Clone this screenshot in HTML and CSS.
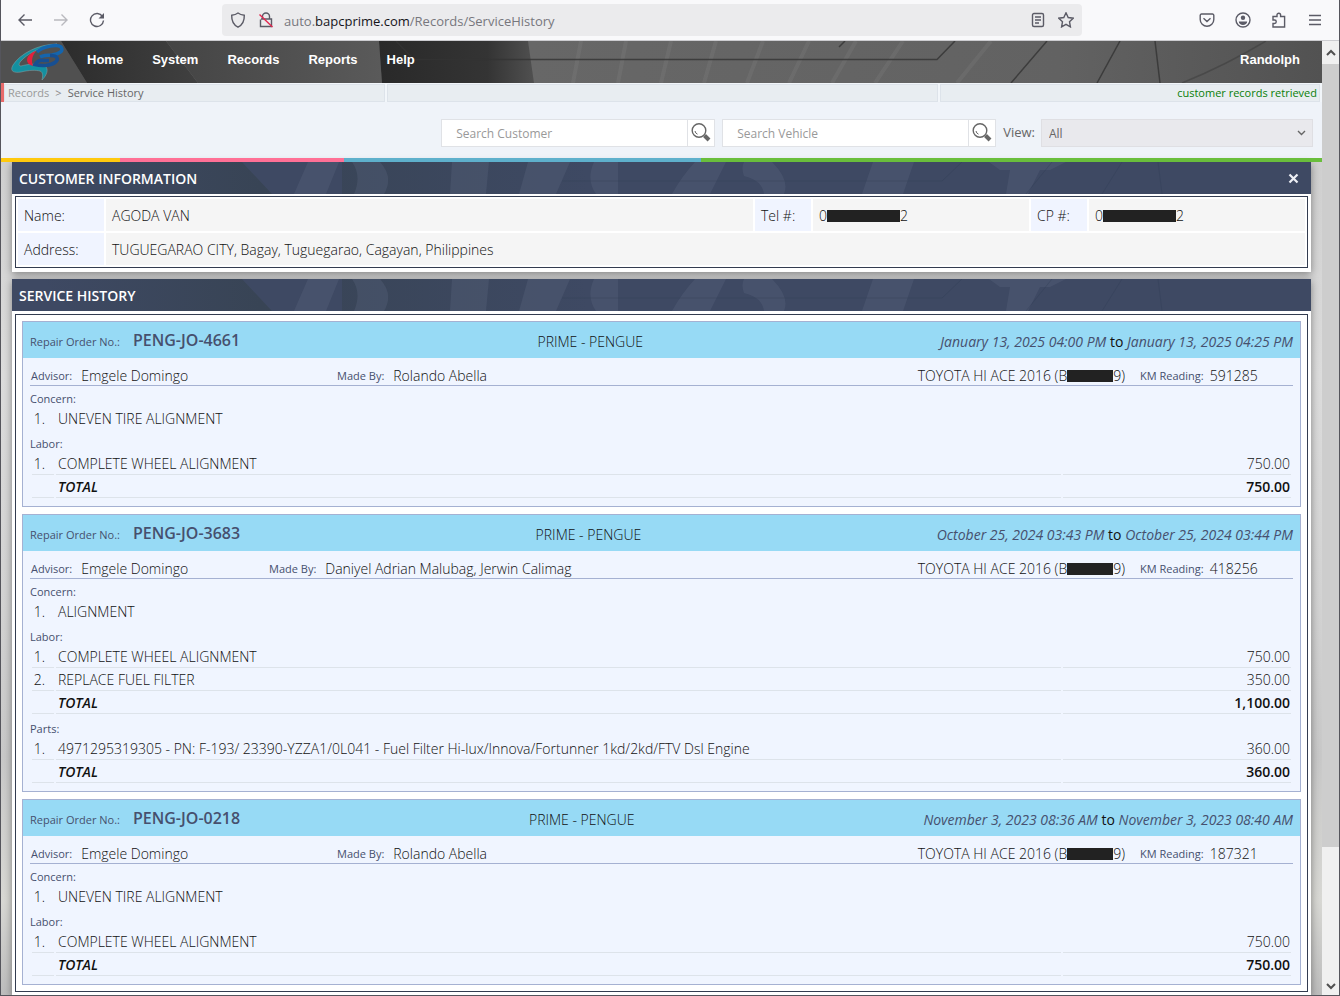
FILE: index.html
```html
<!DOCTYPE html>
<html lang="en">
<head>
    <meta charset="UTF-8">
    <meta name="viewport" content="width=device-width, initial-scale=1.0">
    <title>Service History</title>
    <link rel="stylesheet" href="styles.css">
</head>
<body>
    <!-- Browser toolbar -->
    <div class="toolbar">
        <div class="nav-buttons">
            <button type="button" aria-label="Back"><svg width="16" height="16" viewBox="0 0 16 16"><path d="M15 8H2M7.500 2.500L2 8l5.500 5.500"/></svg></button>
            <button type="button" aria-label="Forward" class="faded"><svg width="16" height="16" viewBox="0 0 16 16"><path d="M1 8h13M8.500 2.500L14 8l-5.500 5.500"/></svg></button>
            <button type="button" aria-label="Reload"><svg width="16" height="16" viewBox="0 0 16 16"><path d="M13.500 4.500A6.500 6.500 0 1 0 14.500 8.500"/><path class="solid" d="M15 1v5.500H9.500z"/></svg></button>
        </div>
        <div class="url-bar">
            <svg width="16" height="16" viewBox="0 0 16 16"><path d="M8 1c2 1.500 4 2 6.300 2.300C14.500 9 12.500 13 8 15.200 3.500 13 1.500 9 1.700 3.300 4 3 6 2.500 8 1z"/></svg>
            <svg class="lock" width="16" height="16" viewBox="0 0 16 16"><path d="M4.500 7V4.500a3.500 3.500 0 0 1 7 0V7M3 7h10.500v7.500H2.500V7.500"/><path class="slash" d="M1.500 2.500l13 12.500"/></svg>
            <span class="url">auto.<b>bapcprime.com</b>/Records/ServiceHistory</span>
            <svg width="16" height="16" viewBox="0 0 16 16"><rect x="2.500" y="1.500" width="11" height="13" rx="1.500"/><path d="M5 5h6M5 8h6M5 11h4"/></svg>
            <svg class="star" width="16" height="16" viewBox="0 0 16 16"><path d="M8 .8l2.200 4.700 5 .7-3.700 3.500.9 5.200L8 12.400l-4.400 2.500.9-5.200L.8 6.200l5-.7z"/></svg>
        </div>
        <div class="tool-buttons">
            <button type="button" aria-label="Pocket"><svg width="16" height="16" viewBox="0 0 16 16"><path d="M2.500 2h11a1.300 1.300 0 0 1 1.300 1.300V7.500a6.800 6.800 0 0 1-13.600 0V3.300A1.300 1.300 0 0 1 2.500 2zM4.500 6.300L8 9.600l3.500-3.300"/></svg></button>
            <button type="button" aria-label="Account"><svg width="16" height="16" viewBox="0 0 16 16"><circle cx="8" cy="8" r="7"/><circle class="solid" cx="8" cy="5.800" r="2.200"/><path class="solid" d="M3.800 9.500h8.400c0 2-2 3.500-4.200 3.500s-4.200-1.500-4.200-3.500z"/></svg></button>
            <button type="button" aria-label="Extensions"><svg width="16" height="16" viewBox="0 0 16 16"><path d="M2 15V11.500h1.500a1.700 1.700 0 0 0 0-3.500H2V4.500h4V3a1.800 1.800 0 0 1 3.600 0v1.500h4V15z"/></svg></button>
            <button type="button" aria-label="Menu"><svg width="16" height="16" viewBox="0 0 16 16"><path d="M2 3.500h12M2 8h12M2 12.500h12"/></svg></button>
        </div>
    </div>

    <div class="window">
        <div class="page">
            <header>
                <a href="#" class="logo" aria-label="BAPC Prime">
                    <svg width="54" height="38" viewBox="0 0 54 38">
                        <path fill="#1490a0" stroke="#86a4aa" stroke-width=".5" d="M46 1C27 1 9 11 2 22c-4 7 2 8 8 7 8-2 15-2 19-1 3 1 3 5 2 9 5-5 7-11 3-14-6-3-17-2-24 0-3 0-2-3 0-5C15 12 28 4 46 1z"/>
                        <path fill="none" stroke="#1465ae" stroke-width="3.500" d="M26 9C33 3 46 1 50 4c3 4-2 7-9 8-5 0-8 0-12 2"/>
                        <path fill="none" stroke="#174f92" stroke-width="3.500" d="M39 12.500c8 0 9 4 5 7-4 3-13 4-20 2 2-3 5-5 9-4h5"/>
                        <path fill="#e5203c" d="M25 8c-6 2-9 6-9 9 0 3 2 5 6 6-2-5-1-10 3-15z"/>
                    </svg>
                </a>
                <nav>
                    <a href="#">Home</a>
                    <a href="#">System</a>
                    <a href="#">Records</a>
                    <a href="#">Reports</a>
                    <a href="#">Help</a>
                </nav>
                <a href="#" class="user">Randolph</a>
            </header>

            <div class="breadcrumb">
                <div class="crumbs"><a href="#">Records</a><i>&gt;</i><span>Service History</span></div>
                <div class="crumb-mid"></div>
                <div class="status">customer records retrieved</div>
            </div>

            <form class="filters">
                <div class="search">
                    <input type="text" placeholder="Search Customer" aria-label="Search Customer">
                    <button type="button" aria-label="Find customer"><svg width="22" height="22" viewBox="0 0 22 22"><circle cx="9" cy="8.500" r="6.800"/><path class="glint" d="M5 9a4 4 0 0 0 2.500 3.200"/><path class="handle" d="M14.500 13.500l4.500 4.500"/></svg></button>
                </div>
                <div class="search">
                    <input type="text" placeholder="Search Vehicle" aria-label="Search Vehicle">
                    <button type="button" aria-label="Find vehicle"><svg width="22" height="22" viewBox="0 0 22 22"><circle cx="9" cy="8.500" r="6.800"/><path class="glint" d="M5 9a4 4 0 0 0 2.500 3.200"/><path class="handle" d="M14.500 13.500l4.500 4.500"/></svg></button>
                </div>
                <label for="view">View:</label>
                <select id="view">
                    <option>All</option>
                </select>
            </form>
            <div class="strip"></div>

            <main>
                <section class="panel">
                    <div class="panel-title">
                        <h2>CUSTOMER INFORMATION</h2>
                        <button type="button" aria-label="Close"><svg width="11" height="11" viewBox="0 0 11 11"><path d="M1.500 1.500l8 8M9.500 1.500l-8 8"/></svg></button>
                    </div>
                    <div class="panel-body">
                        <table class="customer">
                            <tr>
                                <th>Name:</th>
                                <td>AGODA VAN</td>
                                <th class="short">Tel #:</th>
                                <td class="phone">0<span class="mask"></span>2</td>
                                <th class="short">CP #:</th>
                                <td class="phone">0<span class="mask"></span>2</td>
                            </tr>
                            <tr>
                                <th>Address:</th>
                                <td colspan="5">TUGUEGARAO CITY, Bagay, Tuguegarao, Cagayan, Philippines</td>
                            </tr>
                        </table>
                    </div>
                </section>

                <section class="panel">
                    <div class="panel-title">
                        <h2>SERVICE HISTORY</h2>
                    </div>
                    <div class="panel-body orders">
                        <article class="order">
                            <div class="order-head">
                                <div><small>Repair Order No.:</small><strong>PENG-JO-4661</strong></div>
                                <div>PRIME - PENGUE</div>
                                <div class="dates"><em>January 13, 2025 04:00 PM</em> to <em>January 13, 2025 04:25 PM</em></div>
                            </div>
                            <div class="order-meta">
                                <div class="advisor"><small>Advisor:</small>Emgele Domingo</div>
                                <div class="made-by"><small>Made By:</small>Rolando Abella</div>
                                <div class="vehicle">TOYOTA HI ACE 2016 (B<span class="mask plate"></span>9)</div>
                                <div class="km"><small>KM Reading:</small>591285</div>
                            </div>
                            <h3>Concern:</h3>
                            <table class="items concern">
                                <tr><td class="no">1.</td><td>UNEVEN TIRE ALIGNMENT</td></tr>
                            </table>
                            <h3>Labor:</h3>
                            <table class="items">
                                <tr><td class="no">1.</td><td>COMPLETE WHEEL ALIGNMENT</td><td class="amount">750.00</td></tr>
                                <tr class="total"><td class="no"></td><td>TOTAL</td><td class="amount">750.00</td></tr>
                            </table>
                        </article>

                        <article class="order">
                            <div class="order-head">
                                <div><small>Repair Order No.:</small><strong>PENG-JO-3683</strong></div>
                                <div>PRIME - PENGUE</div>
                                <div class="dates"><em>October 25, 2024 03:43 PM</em> to <em>October 25, 2024 03:44 PM</em></div>
                            </div>
                            <div class="order-meta">
                                <div class="advisor narrow"><small>Advisor:</small>Emgele Domingo</div>
                                <div class="made-by"><small>Made By:</small>Daniyel Adrian Malubag, Jerwin Calimag</div>
                                <div class="vehicle">TOYOTA HI ACE 2016 (B<span class="mask plate"></span>9)</div>
                                <div class="km"><small>KM Reading:</small>418256</div>
                            </div>
                            <h3>Concern:</h3>
                            <table class="items concern">
                                <tr><td class="no">1.</td><td>ALIGNMENT</td></tr>
                            </table>
                            <h3>Labor:</h3>
                            <table class="items">
                                <tr><td class="no">1.</td><td>COMPLETE WHEEL ALIGNMENT</td><td class="amount">750.00</td></tr>
                                <tr><td class="no">2.</td><td>REPLACE FUEL FILTER</td><td class="amount">350.00</td></tr>
                                <tr class="total"><td class="no"></td><td>TOTAL</td><td class="amount">1,100.00</td></tr>
                            </table>
                            <h3>Parts:</h3>
                            <table class="items">
                                <tr><td class="no">1.</td><td>4971295319305 - PN: F-193/ 23390-YZZA1/0L041 - Fuel Filter Hi-lux/Innova/Fortunner 1kd/2kd/FTV Dsl Engine</td><td class="amount">360.00</td></tr>
                                <tr class="total"><td class="no"></td><td>TOTAL</td><td class="amount">360.00</td></tr>
                            </table>
                        </article>

                        <article class="order">
                            <div class="order-head">
                                <div><small>Repair Order No.:</small><strong>PENG-JO-0218</strong></div>
                                <div>PRIME - PENGUE</div>
                                <div class="dates"><em>November 3, 2023 08:36 AM</em> to <em>November 3, 2023 08:40 AM</em></div>
                            </div>
                            <div class="order-meta">
                                <div class="advisor"><small>Advisor:</small>Emgele Domingo</div>
                                <div class="made-by"><small>Made By:</small>Rolando Abella</div>
                                <div class="vehicle">TOYOTA HI ACE 2016 (B<span class="mask plate"></span>9)</div>
                                <div class="km"><small>KM Reading:</small>187321</div>
                            </div>
                            <h3>Concern:</h3>
                            <table class="items concern">
                                <tr><td class="no">1.</td><td>UNEVEN TIRE ALIGNMENT</td></tr>
                            </table>
                            <h3>Labor:</h3>
                            <table class="items">
                                <tr><td class="no">1.</td><td>COMPLETE WHEEL ALIGNMENT</td><td class="amount">750.00</td></tr>
                                <tr class="total"><td class="no"></td><td>TOTAL</td><td class="amount">750.00</td></tr>
                            </table>
                        </article>
                    </div>
                </section>
            </main>
        </div>

        <div class="scrollbar">
            <button type="button" aria-label="Scroll up"><svg width="10" height="8" viewBox="0 0 10 8"><path d="M1 6l4-4 4 4"/></svg></button>
            <div class="thumb"></div>
            <div class="track"></div>
            <button type="button" aria-label="Scroll down"><svg width="10" height="8" viewBox="0 0 10 8"><path d="M1 2l4 4 4-4"/></svg></button>
        </div>
    </div>
</body>
</html>
```
FILE: styles.css
```css
* {
    box-sizing: border-box;
}
body {
    margin: 0;
    height: 100vh;
    display: flex;
    flex-direction: column;
    overflow: hidden;
    border: 1px solid #55555c;
    border-top: 0;
    font-family: "Open Sans", "Noto Sans", sans-serif;
    font-size: 13px;
    line-height: 19px;
    color: #111;
}
button {
    padding: 0;
    border: 0;
    background: none;
    display: flex;
    align-items: center;
    justify-content: center;
}
a {
    text-decoration: none;
}
svg {
    fill: none;
    stroke: #5b5b66;
    stroke-width: 1.400;
    display: block;
    flex: none;
}

/* Browser toolbar */
.toolbar {
    flex: none;
    height: 41px;
    display: flex;
    align-items: center;
    background-color: #f9f9fb;
    border-bottom: 1px solid #ccccd0;
}
.toolbar .solid {
    fill: #5b5b66;
    stroke: none;
}
.nav-buttons {
    display: flex;
    gap: 20px;
    padding-left: 16px;
    width: 221px;
}
.faded {
    opacity: 0.4;
}
.url-bar {
    flex: 1;
    height: 32px;
    display: flex;
    align-items: center;
    padding: 0 8px;
    background-color: #ebebed;
    border-radius: 4px;
}
.url-bar .lock {
    margin: 0 10px 0 12px;
}
.url-bar .slash {
    stroke: #e22850;
}
.url-bar .star {
    margin-left: 12px;
}
.url {
    flex: 1;
    padding-top: 2px;
    color: #77777d;
}
.url b {
    font-weight: 400;
    color: #15141a;
}
.tool-buttons {
    display: flex;
    gap: 20px;
    padding-right: 16px;
    width: 257px;
    justify-content: flex-end;
}

.window {
    flex: 1;
    min-height: 0;
    display: flex;
}
.page {
    flex: 1;
    min-width: 0;
    overflow: hidden;
    background: linear-gradient(#e2e2e2, #cfcfcf 12%, #dcdcdc 35%, #d2d2d2 60%, #c8c8c8 75%, #d8d8d4 90%, #bdbdbd);
}

/* App header */
header {
    height: 42px;
    display: flex;
    align-items: center;
    padding: 0 22px 0 10px;
    background-color: #666;
    background-image: url("data:image/svg+xml,%3Csvg xmlns='http://www.w3.org/2000/svg' width='1321' height='42'%3E%3Cdefs%3E%3ClinearGradient id='a'%3E%3Cstop stop-color='%232c2c2c'/%3E%3Cstop offset='1' stop-color='%23404040'/%3E%3C/linearGradient%3E%3ClinearGradient id='b'%3E%3Cstop stop-color='%23444'/%3E%3Cstop offset='1' stop-color='%235a5a5a'/%3E%3C/linearGradient%3E%3ClinearGradient id='c'%3E%3Cstop stop-color='%23292929'/%3E%3Cstop offset='.7' stop-color='%23343434'/%3E%3Cstop offset='1' stop-color='%23505050'/%3E%3C/linearGradient%3E%3ClinearGradient id='d'%3E%3Cstop stop-color='%236c6c6c'/%3E%3Cstop offset='.8' stop-color='%23626262'/%3E%3Cstop offset='1' stop-color='%23525252'/%3E%3C/linearGradient%3E%3C/defs%3E%3Cpath fill='url(%23d)' d='M0 0h1321v42H0z'/%3E%3Cpath fill='%23505050' d='M0 0h60l26 42H0z'/%3E%3Cpath fill='url(%23a)' d='M60 0h105l32 42H86z'/%3E%3Cpath fill='url(%23b)' d='M165 0h213l3 42H197z'/%3E%3Cpath fill='url(%23c)' d='M378 0h149l6 42H381z'/%3E%3Cg fill='none' stroke='%23fff' stroke-opacity='.05' stroke-width='4'%3E%3Cpath d='M580 0l-8 42M625 0l-8 42M670 0l-10 42M715 0l-12 42M762 0l-16 42M808 0l-20 42M855 0l-24 42M902 0l-28 42M990 0l-34 42'/%3E%3C/g%3E%3Cg fill='none' stroke='%23333' stroke-opacity='.8' stroke-width='1.5'%3E%3Cpath d='M395 0l18 18.500h523l18-18.500M838 6l6-6M1046 0l-36 42M1119 0l-23 42M1154 0l5 42'/%3E%3Cpath stroke-opacity='.4' d='M1265 0q-40 24-84 42'/%3E%3C/g%3E%3C/svg%3E");
    background-size: 100% 100%;
    font-family: "Liberation Sans", Arial, sans-serif;
    font-weight: bold;
}
header .logo svg {
    stroke: none;
}
header nav {
    flex: 1;
    display: flex;
    gap: 29px;
    padding: 0 0 6px 22px;
}
header nav a, header .user {
    color: #fff;
}
header .user {
    padding-bottom: 6px;
}

.breadcrumb {
    display: flex;
    gap: 2px;
    height: 19px;
    padding: 1px 2px 0 0;
    background-color: #f2f6fa;
    border-left: 3px solid #e86a6a;
    font-size: 11px;
    line-height: 15px;
}
.breadcrumb > div {
    background-color: #e8edf1;
    border: 1px solid #dde3ea;
}
.crumbs {
    flex: 379;
    padding-left: 3px;
    color: #666;
}
.crumbs a {
    color: #999;
}
.crumbs i {
    font-style: normal;
    color: #888;
    margin: 0 6px;
}
.crumb-mid {
    flex: 554;
}
.status {
    flex: 379;
    text-align: right;
    padding-right: 2px;
    color: #087f08;
}

.filters {
    display: flex;
    justify-content: flex-end;
    align-items: center;
    height: 56px;
    padding: 5px 9px 0 0;
    background-color: #eff3f9;
    color: #666;
}
.search {
    display: flex;
    height: 28px;
    margin-right: 7px;
    background-color: #fff;
    border: 1px solid #e0e2e6;
}
.search input {
    width: 245px;
    border: 0;
    padding: 2px 14px 0;
    background: none;
    font: inherit;
    font-size: 12px;
}
.search input::placeholder {
    color: #999;
}
.search button {
    width: 27px;
    border-left: 1px solid #e0e2e6;
}
.search svg {
    stroke: #666;
}
.search .glint {
    stroke-width: 1;
}
.search .handle {
    stroke-width: 4;
}
.filters select {
    width: 272px;
    height: 28px;
    margin-left: 6px;
    padding: 2px 7px 0;
    border: 1px solid #dfdfe3;
    border-radius: 0;
    appearance: none;
    background: #e9e9ed url("data:image/svg+xml,%3Csvg xmlns='http://www.w3.org/2000/svg' width='9' height='6'%3E%3Cpath fill='none' stroke='%23666' stroke-width='1.400' d='M1 1l3.500 3.500L8 1'/%3E%3C/svg%3E") no-repeat right 6px center;
    font: inherit;
    font-size: 12px;
    color: #666;
}
.strip {
    height: 4px;
    background: linear-gradient(90deg, #ffc90e 9%, #ff7096 9% 26%, #5eb0cc 26% 53%, #69be3c 53%);
    /* keeps the panel shadow off the strip */
    position: relative;
    z-index: 1;
}

/* Panels */
main {
    padding: 0 11px;
    font-size: 14px;
    font-weight: 300;
}
.panel {
    margin-bottom: 7px;
    background-color: #fff;
    box-shadow: 0 2px 8px rgba(0, 0, 0, 0.4);
}
.panel-title {
    height: 32px;
    display: flex;
    align-items: center;
    justify-content: space-between;
    padding: 0 12px 0 7px;
    background-color: #3e4963;
    background-image: url("data:image/svg+xml,%3Csvg xmlns='http://www.w3.org/2000/svg' width='1299' height='32'%3E%3Cdefs%3E%3ClinearGradient id='a'%3E%3Cstop stop-color='%23384455' stop-opacity='0'/%3E%3Cstop offset='.4' stop-color='%23384455'/%3E%3Cstop offset='1' stop-color='%23384455' stop-opacity='0'/%3E%3C/linearGradient%3E%3C/defs%3E%3Cpath fill='url(%23a)' d='M30 0h200l30 32H60zM330 0h240l8 32H330z'/%3E%3Cg fill='%23606b85' fill-opacity='.28'%3E%3Cpath d='M296 0h31l-13 32h-32zM340 0h28q14 15 4 32h-30q8-18-2-32zM440 0h37l-3 32h-36zM516 0h42l-14 32h-37zM582 0h24v32h-22q-10-14-2-32zM683 0h31l-16 32h-38q10-18 23-32zM732 0h28q18 18 12 32h-20q-2-14-20-18 -3-8 0-14zM861 0h41l-11 32h-41zM977 0h77l-16 8h-10l-12 24h-22l4-24h-10z'/%3E%3C/g%3E%3Cpath fill='none' stroke='%23303a52' stroke-opacity='.3' d='M550 19h380l20-19M1040 0l-26 32M1110 0l-20 32M1146 0l4 32'/%3E%3C/svg%3E");
    background-size: 100% 100%;
}
.panel-title h2 {
    margin: 0;
    font-size: 14px;
    font-weight: 600;
    color: #fff;
}
.panel-title svg {
    stroke: #eef0f5;
    stroke-width: 2.200;
}
.panel-body {
    padding: 2px 3px 4px;
}
.customer {
    width: 100%;
    border: 1px solid #333c50;
    border-spacing: 2px;
    table-layout: fixed;
}
.customer th, .customer td {
    height: 32px;
    padding: 1px 6px;
    text-align: left;
    background-color: #f5f5f5;
}
.customer th {
    width: 86px;
    font-weight: 300;
    background-color: #f0f4ff;
}
.customer .short {
    width: 56px;
}
.customer .phone {
    width: 216px;
}
.mask {
    display: inline-block;
    width: 73px;
    height: 12px;
    vertical-align: -1px;
    background-color: #222;
}
.mask.plate {
    width: 46px;
}

/* Repair orders */
.orders {
    display: flex;
    flex-direction: column;
    gap: 7px;
    padding: 7px;
    border: 3px solid #fff;
    outline: 1px solid #333c50;
    outline-offset: -4px;
}
.order {
    padding: 0 7px 8px;
    background-color: #f0f5ff;
    border: 1px solid #a5b1d2;
}
.order-head {
    display: flex;
    justify-content: space-between;
    align-items: center;
    height: 36px;
    margin: 0 -7px;
    padding: 2px 7px 0;
    background-color: #97daf5;
}
.order small, .order h3 {
    font-size: 11px;
    font-weight: 400;
    color: #46506e;
}
.order-head strong {
    margin-left: 13px;
    font-size: 16px;
    font-weight: 600;
    color: #46506e;
}
.dates {
    font-weight: 400;
}
.dates em {
    color: #46506e;
}
.order-meta {
    display: flex;
    height: 28px;
    padding: 8px 0 0 1px;
    border-bottom: 1px solid #a5b1d2;
    white-space: nowrap;
}
.order-meta small {
    margin-right: 9px;
    vertical-align: 1px;
}
.advisor {
    flex: 0 0 306px;
}
.advisor.narrow {
    flex-basis: 238px;
}
.made-by {
    flex: 1;
}
.km {
    width: 153px;
    margin-left: 15px;
}
.order .km small {
    margin-right: 6px;
}
.order h3 {
    margin: 6px 0 0;
    line-height: 17px;
}
.order-meta + h3 {
    margin-top: 4px;
}
.items {
    width: 100%;
    border-spacing: 2px 0;
}
.items td {
    padding: 2px 1px 1px;
    border-bottom: 1px solid #dde3ea;
}
.concern td {
    border-bottom: 0;
}
.items .no {
    width: 22px;
    text-align: center;
    padding-right: 8px;
}
.items td:nth-child(2) {
    padding-left: 2px;
}
.items .amount {
    width: 228px;
    text-align: right;
}
.total td {
    font-weight: 600;
}
.total td:nth-child(2) {
    font-style: italic;
}

/* Page scrollbar */
.scrollbar {
    width: 17px;
    display: flex;
    flex-direction: column;
    background-color: #f0f0f0;
}
.scrollbar button {
    height: 23px;
}
.scrollbar svg {
    stroke: #505050;
    stroke-width: 2;
}
.scrollbar button:last-child {
    height: 18px;
}
.thumb {
    flex: 783;
    background-color: #cdcdcd;
}
.track {
    flex: 130;
}
```
